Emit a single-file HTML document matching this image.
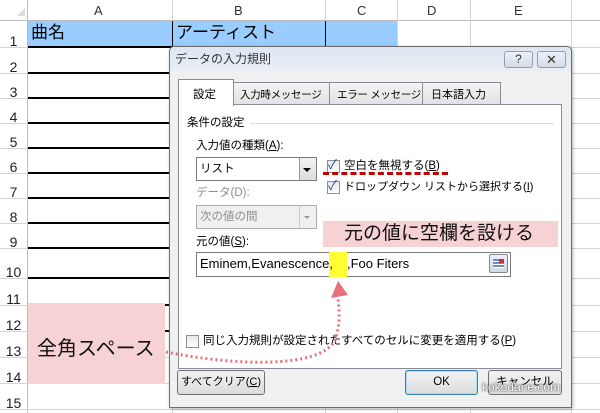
<!DOCTYPE html>
<html><head><meta charset="utf-8"><style>
*{margin:0;padding:0;box-sizing:border-box}
body{width:600px;height:413px;overflow:hidden;background:#fff;position:relative;font-family:"Liberation Sans","Noto Sans CJK JP",sans-serif;}
.a{position:absolute}
.t{position:absolute;font-size:11.5px;color:#000;white-space:nowrap;line-height:14px}
.hl{position:absolute;height:1px;background:#d4d4d4}
.vl{position:absolute;width:1px;background:#d4d4d4}
.rn{position:absolute;left:0;width:27px;text-align:center;font-size:14px;color:#222;line-height:14px}
.btn{position:absolute;border:1px solid #707070;border-radius:3px;background:linear-gradient(#f2f2f2,#dcdcdc);font-size:11.5px;text-align:center;white-space:nowrap}
.cb{position:absolute;width:13px;height:13px;border:1px solid #8e8f8f;background:linear-gradient(#e8e8e8,#fff)}
</style></head><body>
<div class="hl" style="left:0;top:20px;width:600px;background:#bcbcbc"></div>
<div class="a" style="left:17px;top:8px;width:0;height:0;border-left:8px solid transparent;border-bottom:8px solid #dcdcdc"></div>
<div class="t" style="left:94px;top:4px;font-size:13px;color:#333">A</div>
<div class="t" style="left:234px;top:4px;font-size:13px;color:#333">B</div>
<div class="t" style="left:357px;top:4px;font-size:13px;color:#333">C</div>
<div class="t" style="left:427px;top:4px;font-size:13px;color:#333">D</div>
<div class="t" style="left:514px;top:4px;font-size:13px;color:#333">E</div>
<div class="vl" style="left:27px;top:0;height:413px;background:#bcbcbc"></div>
<div class="vl" style="left:172px;top:0;height:413px"></div>
<div class="vl" style="left:325px;top:0;height:413px"></div>
<div class="vl" style="left:397px;top:0;height:413px"></div>
<div class="vl" style="left:470px;top:0;height:413px"></div>
<div class="vl" style="left:571px;top:0;height:413px"></div>
<div class="hl" style="left:0;top:47px;width:600px"></div>
<div class="hl" style="left:0;top:73px;width:600px"></div>
<div class="hl" style="left:0;top:98px;width:600px"></div>
<div class="hl" style="left:0;top:123px;width:600px"></div>
<div class="hl" style="left:0;top:148px;width:600px"></div>
<div class="hl" style="left:0;top:173px;width:600px"></div>
<div class="hl" style="left:0;top:198px;width:600px"></div>
<div class="hl" style="left:0;top:223px;width:600px"></div>
<div class="hl" style="left:0;top:248px;width:600px"></div>
<div class="hl" style="left:0;top:278px;width:600px"></div>
<div class="hl" style="left:0;top:305px;width:600px"></div>
<div class="hl" style="left:0;top:331px;width:600px"></div>
<div class="hl" style="left:0;top:357px;width:600px"></div>
<div class="hl" style="left:0;top:383px;width:600px"></div>
<div class="hl" style="left:0;top:409px;width:600px"></div>
<div class="a" style="left:28px;top:21px;width:369px;height:26px;background:#99ccff"></div>
<div class="a" style="left:172px;top:21px;width:1px;height:26px;background:#000"></div>
<div class="a" style="left:325px;top:21px;width:1px;height:26px;background:#000"></div>
<div class="t" style="left:31px;top:24px;font-size:17px;line-height:18px">曲名</div>
<div class="t" style="left:176px;top:24px;font-size:17px;line-height:18px">アーティスト</div>
<div class="a" style="left:28px;top:46px;width:297px;height:2px;background:#000"></div>
<div class="a" style="left:28px;top:72px;width:145px;height:2px;background:#000"></div>
<div class="a" style="left:28px;top:97px;width:145px;height:2px;background:#000"></div>
<div class="a" style="left:28px;top:122px;width:145px;height:2px;background:#000"></div>
<div class="a" style="left:28px;top:147px;width:145px;height:2px;background:#000"></div>
<div class="a" style="left:28px;top:172px;width:145px;height:2px;background:#000"></div>
<div class="a" style="left:28px;top:197px;width:145px;height:2px;background:#000"></div>
<div class="a" style="left:28px;top:222px;width:145px;height:2px;background:#000"></div>
<div class="a" style="left:28px;top:247px;width:145px;height:2px;background:#000"></div>
<div class="a" style="left:28px;top:277px;width:145px;height:2px;background:#000"></div>
<div class="a" style="left:28px;top:304px;width:145px;height:2px;background:#000"></div>
<div class="a" style="left:28px;top:330px;width:145px;height:2px;background:#000"></div>
<div class="rn" style="top:34px">1</div><div class="rn" style="top:60px">2</div><div class="rn" style="top:85px">3</div>
<div class="rn" style="top:110px">4</div><div class="rn" style="top:135px">5</div><div class="rn" style="top:160px">6</div>
<div class="rn" style="top:185px">7</div><div class="rn" style="top:210px">8</div><div class="rn" style="top:235px">9</div>
<div class="rn" style="top:265px">10</div><div class="rn" style="top:292px">11</div><div class="rn" style="top:318px">12</div>
<div class="rn" style="top:344px">13</div><div class="rn" style="top:370px">14</div><div class="rn" style="top:396px">15</div>
<!-- dialog -->
<div class="a" style="left:169px;top:46px;width:403px;height:362px;background:#f0f0f0;border:1px solid #6d6d6d;border-radius:5px 5px 0 0;box-shadow:1px 1px 3px rgba(0,0,0,.3)"></div>
<div class="a" style="left:170px;top:47px;width:401px;height:24px;background:linear-gradient(#dce6f2,#e9eef5);border-radius:5px 5px 0 0"></div>
<div class="t" style="left:175px;top:52px;font-size:12px;color:#333">データの入力規則</div>
<div class="btn" style="left:504px;top:51px;width:29px;height:17px;border-color:#8ea0b8;background:linear-gradient(#eef2f8,#d4dce8);font-size:12px;line-height:15px;color:#333">?</div>
<div class="btn" style="left:537px;top:51px;width:29px;height:17px;border-color:#8ea0b8;background:linear-gradient(#eef2f8,#d4dce8);font-size:13px;line-height:15px;color:#333">✕</div>
<div class="a" style="left:178px;top:104px;width:384px;height:265px;background:#fff;border:1px solid #898c95"></div>
<div class="a" style="left:233px;top:82px;width:97px;height:23px;background:linear-gradient(#f4f4f4,#e2e2e2);border:1px solid #898c95"></div>
<div class="a" style="left:329px;top:82px;width:94px;height:23px;background:linear-gradient(#f4f4f4,#e2e2e2);border:1px solid #898c95"></div>
<div class="a" style="left:422px;top:82px;width:79px;height:23px;background:linear-gradient(#f4f4f4,#e2e2e2);border:1px solid #898c95"></div>
<div class="a" style="left:178px;top:79px;width:56px;height:27px;background:#fff;border:1px solid #898c95;border-bottom:none"></div>
<div class="t" style="left:193px;top:88px">設定</div>
<div class="t" style="left:240px;top:88px;font-size:10.5px;letter-spacing:-0.3px">入力時メッセージ</div>
<div class="t" style="left:337px;top:88px;font-size:10.5px;letter-spacing:-0.3px">エラー メッセージ</div>
<div class="t" style="left:431px;top:88px;font-size:11px">日本語入力</div>
<div class="t" style="left:187px;top:116px">条件の設定</div>
<div class="a" style="left:250px;top:123px;width:304px;height:1px;background:#dcdcdc"></div>
<div class="t" style="left:196px;top:139px">入力値の種類(<u>A</u>):</div>
<div class="a" style="left:196px;top:157px;width:121px;height:24px;border:1px solid #7a7a7a;background:#fff"></div>
<div class="t" style="left:200px;top:162px">リスト</div>
<div class="a" style="left:299px;top:158px;width:17px;height:22px;background:linear-gradient(#f2f2f2,#ddd);border-left:1px solid #999"></div>
<div class="a" style="left:303px;top:168px;border-left:4px solid transparent;border-right:4px solid transparent;border-top:4px solid #000"></div>
<div class="cb" style="left:327px;top:160px"></div><div class="t" style="left:328px;top:158px;color:#2a4a9a;font-size:13px">✓</div>
<div class="t" style="left:344px;top:159px">空白を無視する(<u>B</u>)</div>
<div class="a" style="left:323px;top:172px;width:125px;border-top:3px dashed #c00000"></div>
<div class="cb" style="left:327px;top:181px"></div><div class="t" style="left:328px;top:179px;color:#2a4a9a;font-size:13px">✓</div>
<div class="t" style="left:344px;top:180px;font-size:11px">ドロップダウン リストから選択する(<u>I</u>)</div>
<div class="t" style="left:196px;top:186px;color:#8d8d8d">データ(D):</div>
<div class="a" style="left:196px;top:205px;width:121px;height:24px;border:1px solid #adadad;background:#f0f0f0"></div>
<div class="t" style="left:200px;top:210px;color:#8d8d8d">次の値の間</div>
<div class="a" style="left:299px;top:206px;width:17px;height:22px;border-left:1px solid #ccc"></div>
<div class="a" style="left:304px;top:216px;border-left:3px solid transparent;border-right:3px solid transparent;border-top:3px solid #999"></div>
<div class="a" style="left:323px;top:221px;width:235px;height:26px;background:#f6d2d4"></div>
<div class="t" style="left:344px;top:223px;font-size:19px;line-height:22px;color:#111">元の値に空欄を設ける</div>
<div class="t" style="left:196px;top:235px">元の値(<u>S</u>):</div>
<div class="a" style="left:196px;top:252px;width:315px;height:25px;border:1px solid #7a7a7a;background:#fff"></div>
<div class="a" style="left:329px;top:252px;width:18px;height:25px;background:#ffff33"></div>
<div class="t" style="left:200px;top:257px;font-size:13px">Eminem,Evanescence,</div>
<div class="t" style="left:347px;top:257px;font-size:13px">,Foo Fiters</div>
<div class="a" style="left:489px;top:254px;width:19px;height:19px;border:1px solid #888;border-radius:2px;background:linear-gradient(#eef,#cdd);"><div class="a" style="left:3px;top:4px;width:11px;height:9px;background:repeating-linear-gradient(#6a8fc0 0 2px,#fff 2px 3px)"></div><div class="a" style="left:9px;top:4px;width:5px;height:4px;background:#d03030"></div></div>
<div class="cb" style="left:186px;top:335px"></div>
<div class="t" style="left:203px;top:334px">同じ入力規則が設定されたすべてのセルに変更を適用する(<u>P</u>)</div>
<div class="btn" style="left:177px;top:370px;width:88px;height:25px;line-height:23px;font-size:11px">すべてクリア(<u>C</u>)</div>
<div class="btn" style="left:405px;top:370px;width:73px;height:25px;line-height:23px;border-color:#3c7fb1;box-shadow:inset 0 0 0 1px #a8dcf4">OK</div>
<div class="btn" style="left:488px;top:370px;width:74px;height:25px;line-height:23px">キャンセル</div>
<div class="t" style="left:482px;top:380px;font-size:12px;color:#fff;text-shadow:0 0 2px #555,0 0 1px #333">kokodane.com</div>
<div class="a" style="left:28px;top:303px;width:137px;height:81px;background:#f6d2d4"></div>
<div class="t" style="left:37px;top:337px;font-size:20px;line-height:24px;color:#111">全角スペース</div>
<svg class="a" style="left:0;top:0" width="600" height="413">
<path d="M166 352 C230 365 320 370 335 340 C342 320 338 305 338 295" fill="none" stroke="#e8707a" stroke-width="3" stroke-dasharray="2 3"/>
<path d="M331 298 L338 281 L348 295 Z" fill="#e8707a"/>
</svg>
</body></html>
